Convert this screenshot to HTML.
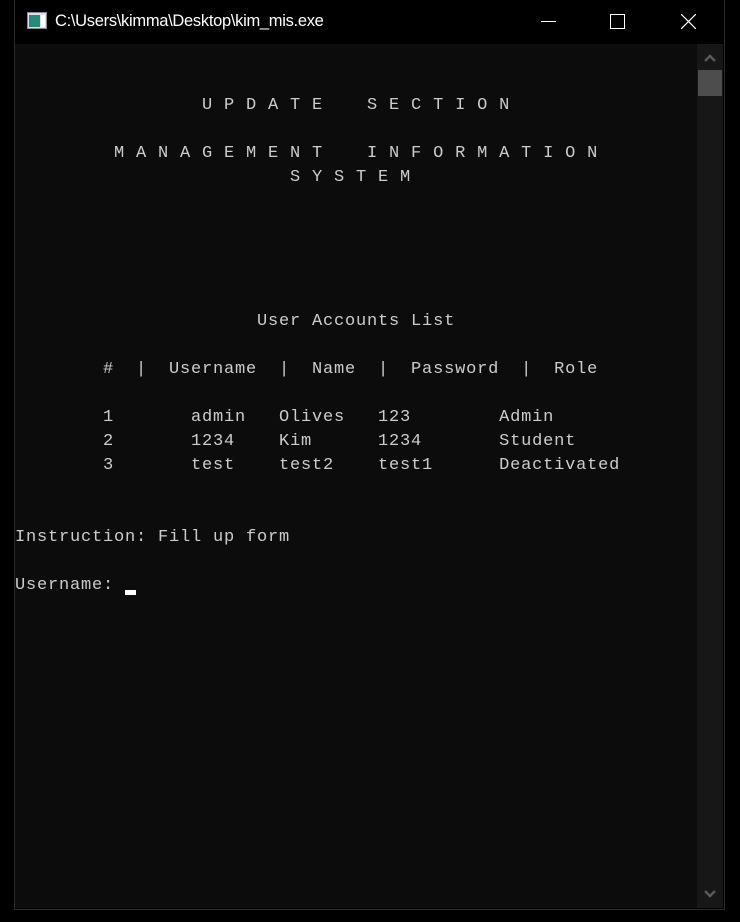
<!DOCTYPE html>
<html><head><style>
body{margin:0;width:740px;height:922px;background:#000;position:relative;overflow:hidden}
.win{position:absolute;left:14px;top:0;width:709px;height:909px;background:#000;border-left:1px solid #2b2b2b;border-right:1px solid #2b2b2b;border-bottom:1px solid #2b2b2b}
.title{position:absolute;left:55px;top:12px;color:#fff;font:16.5px "Liberation Sans",sans-serif;letter-spacing:-0.3px}
.con{position:absolute;left:15px;top:44px;width:682px;height:864px;background:#0c0c0c}
.sb{position:absolute;left:697px;top:44px;width:26px;height:864px;background:#171717}
.thumb{position:absolute;left:698px;top:70px;width:24px;height:26px;background:#4d4d4d}
pre{margin:0;position:absolute;left:15px;top:46px;color:#cccccc;font:17px/24px "Liberation Mono",monospace;letter-spacing:0.8px}
.cur{position:absolute;left:125px;top:590px;width:11px;height:5px;background:#fff}
</style></head><body>
<div class="win"></div>
<svg style="position:absolute;left:27px;top:12px" width="20" height="18"><rect x="0.5" y="0.5" width="19" height="16" fill="#dde" stroke="#889"/><rect x="2" y="3" width="11" height="12" fill="#2a8a7a"/><rect x="14" y="3" width="4" height="12" fill="#fff"/></svg>
<div class="title">C:\Users\kimma\Desktop\kim_mis.exe</div>
<div style="position:absolute;left:541px;top:21px;width:15px;height:1px;background:#fff"></div>
<div style="position:absolute;left:610px;top:14px;width:13px;height:13px;border:1px solid #fff"></div>
<svg style="position:absolute;left:681px;top:14px" width="15" height="15"><path d="M0 0L15 15M15 0L0 15" stroke="#fff" stroke-width="1.2"/></svg>
<div class="con"></div>
<div class="sb"></div>
<div class="thumb"></div>
<svg style="position:absolute;left:704px;top:53px" width="12" height="10"><path d="M1 8L6 3L11 8" stroke="#5a5a5a" stroke-width="2.5" fill="none"/></svg>
<svg style="position:absolute;left:704px;top:889px" width="12" height="10"><path d="M1 2L6 7L11 2" stroke="#5a5a5a" stroke-width="2.5" fill="none"/></svg>
<pre>


                 U P D A T E    S E C T I O N

         M A N A G E M E N T    I N F O R M A T I O N
                         S Y S T E M





                      User Accounts List

        #  |  Username  |  Name  |  Password  |  Role

        1       admin   Olives   123        Admin
        2       1234    Kim      1234       Student
        3       test    test2    test1      Deactivated


Instruction: Fill up form

Username:</pre>
<div class="cur"></div>
</body></html>
